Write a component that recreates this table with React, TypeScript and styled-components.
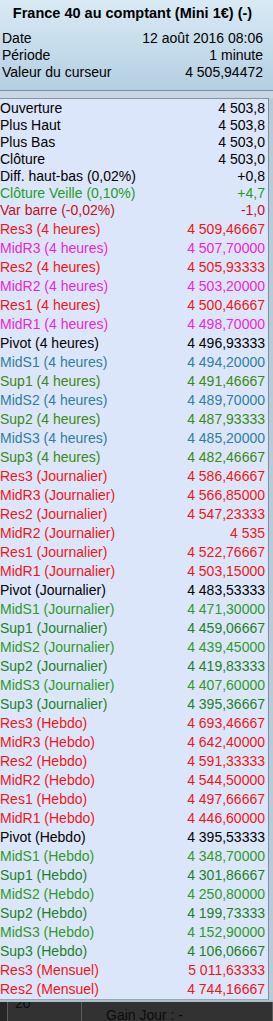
import styled, { createGlobalStyle } from "styled-components"

// styles
const GlobalStyle = createGlobalStyle`
  html, body {
    margin: 0;
    padding: 0;
    overflow: hidden;
    background: #2f2f2f;
  }
  body {
    font-family: "Liberation Sans", Arial, sans-serif;
    font-size: 14px;
  }
`

const Window = styled.div`
  width: 273px;
  background: #b9cbd8;
  display: flex;
  flex-direction: column;
`

const Header = styled.header`
  background: linear-gradient(#d9eaf5, #b4cfe1);
  border-bottom: 1px solid #7392a6;
  height: 91px;
  box-sizing: border-box;
  padding: 4px 10px 0 2px;
`

const Title = styled.h1`
  margin: 0 0 8px;
  font-size: 14.5px;
  font-weight: bold;
  line-height: 18px;
  text-align: center;
  color: #000;
`

const InfoRow = styled.div`
  display: flex;
  justify-content: space-between;
  line-height: 17px;
  color: #000;
`

const Gap = styled.div`
  height: 7px;
  background: #c6d6e2;
`

const Panel = styled.section`
  background: #dce6fb;
  border-top: 1px solid #8795a3;
  border-right: 1px solid #7e8e9c;
  border-bottom: 1px solid #95a6b4;
  margin-right: 4px;
  padding-top: 1px;
`

const Group = styled.div<{ $rowHeight: number; $gapTop?: number }>`
  display: flex;
  flex-direction: column;
  margin-top: ${({ $gapTop }) => $gapTop ?? 0}px;

  & > div {
    height: ${({ $rowHeight }) => $rowHeight}px;
    line-height: ${({ $rowHeight }) => $rowHeight}px;
  }
`

const Row = styled.div<{ $tone: string }>`
  display: flex;
  justify-content: space-between;
  padding: 0 3px 0 0;
  white-space: nowrap;
  color: ${({ $tone }) => $tone};
`

const Strip = styled.div`
  height: 2px;
  background: #aebfcc;
`

const Footer = styled.footer`
  height: 19px;
  display: flex;
  background: #323232;
  overflow: hidden;
`

const FooterCell = styled.div<{ $width?: number; $shade?: string }>`
  width: ${({ $width }) => ($width ? `${$width}px` : "auto")};
  flex: ${({ $width }) => ($width ? "none" : "1")};
  background: ${({ $shade }) => $shade ?? "transparent"};
  border-right: 1px solid #5c5c5c;
  color: #0c0c0c;
  line-height: 17px;
  white-space: nowrap;
`

const CutNumber = styled.span`
  display: block;
  margin: -7px 0 0 7px;
`

const GainLabel = styled.span`
  display: block;
  padding: 5px 0 0 24px;
`

// colours
const tones = {
  base: "#000000",
  veille: "#1f9c1f",
  varbar: "#c1101c",
  res: "#f41414",
  midrMagenta: "#f023dc",
  midsTeal: "#2f7e9c",
  supOlive: "#3a8a12",
  midsGreen: "#2f9a26",
  supGreen: "#1d821d",
}

type Line = { label: string; value: string; tone: string }

const top: Line[] = [
  { label: "Ouverture", value: "4 503,8", tone: tones.base },
  { label: "Plus Haut", value: "4 503,8", tone: tones.base },
  { label: "Plus Bas", value: "4 503,0", tone: tones.base },
  { label: "Clôture", value: "4 503,0", tone: tones.base },
  { label: "Diff. haut-bas (0,02%)", value: "+0,8", tone: tones.base },
  { label: "Clôture Veille (0,10%)", value: "+4,7", tone: tones.veille },
  { label: "Var barre (-0,02%)", value: "-1,0", tone: tones.varbar },
]

const levels = ["Res3", "MidR3", "Res2", "MidR2", "Res1", "MidR1", "Pivot", "MidS1", "Sup1", "MidS2", "Sup2", "MidS3", "Sup3"]

function buildPeriod(period: string, values: string[], midr: string, mids: string, sup: string): Line[] {
  return values.map((value, i) => {
    const name = levels[i]
    let tone = tones.base
    if (name.startsWith("Res")) tone = tones.res
    else if (name.startsWith("MidR")) tone = midr
    else if (name.startsWith("MidS")) tone = mids
    else if (name.startsWith("Sup")) tone = sup
    return { label: `${name} (${period})`, value, tone }
  })
}

const pivots: Line[] = [
  ...buildPeriod(
    "4 heures",
    ["4 509,46667", "4 507,70000", "4 505,93333", "4 503,20000", "4 500,46667", "4 498,70000", "4 496,93333", "4 494,20000", "4 491,46667", "4 489,70000", "4 487,93333", "4 485,20000", "4 482,46667"],
    tones.midrMagenta,
    tones.midsTeal,
    tones.supOlive
  ),
  ...buildPeriod(
    "Journalier",
    ["4 586,46667", "4 566,85000", "4 547,23333", "4 535", "4 522,76667", "4 503,15000", "4 483,53333", "4 471,30000", "4 459,06667", "4 439,45000", "4 419,83333", "4 407,60000", "4 395,36667"],
    tones.res,
    tones.midsGreen,
    tones.supGreen
  ),
  ...buildPeriod(
    "Hebdo",
    ["4 693,46667", "4 642,40000", "4 591,33333", "4 544,50000", "4 497,66667", "4 446,60000", "4 395,53333", "4 348,70000", "4 301,86667", "4 250,80000", "4 199,73333", "4 152,90000", "4 106,06667"],
    tones.res,
    tones.midsGreen,
    tones.supGreen
  ),
  { label: "Res3 (Mensuel)", value: "5 011,63333", tone: tones.res },
  { label: "Res2 (Mensuel)", value: "4 744,16667", tone: tones.res },
]

export default function App() {
  return (
    <>
      <GlobalStyle />
      <Window>
        <Header>
          <Title>France 40 au comptant (Mini 1€) (-)</Title>
          <InfoRow>
            <span>Date</span>
            <span>12 août 2016 08:06</span>
          </InfoRow>
          <InfoRow>
            <span>Période</span>
            <span>1 minute</span>
          </InfoRow>
          <InfoRow>
            <span>Valeur du curseur</span>
            <span>4 505,94472</span>
          </InfoRow>
        </Header>
        <Gap />
        <Panel>
          <Group $rowHeight={17}>
            {top.map((line) => (
              <Row key={line.label} $tone={line.tone}>
                <span>{line.label}</span>
                <span>{line.value}</span>
              </Row>
            ))}
          </Group>
          <Group $rowHeight={19} $gapTop={1}>
            {pivots.map((line) => (
              <Row key={line.label} $tone={line.tone}>
                <span>{line.label}</span>
                <span>{line.value}</span>
              </Row>
            ))}
          </Group>
        </Panel>
        <Strip />
        <Footer>
          <FooterCell $width={7} $shade="#262626" />
          <FooterCell $width={73}>
            <CutNumber>20</CutNumber>
          </FooterCell>
          <FooterCell>
            <GainLabel>Gain Jour : -</GainLabel>
          </FooterCell>
        </Footer>
      </Window>
    </>
  )
}
